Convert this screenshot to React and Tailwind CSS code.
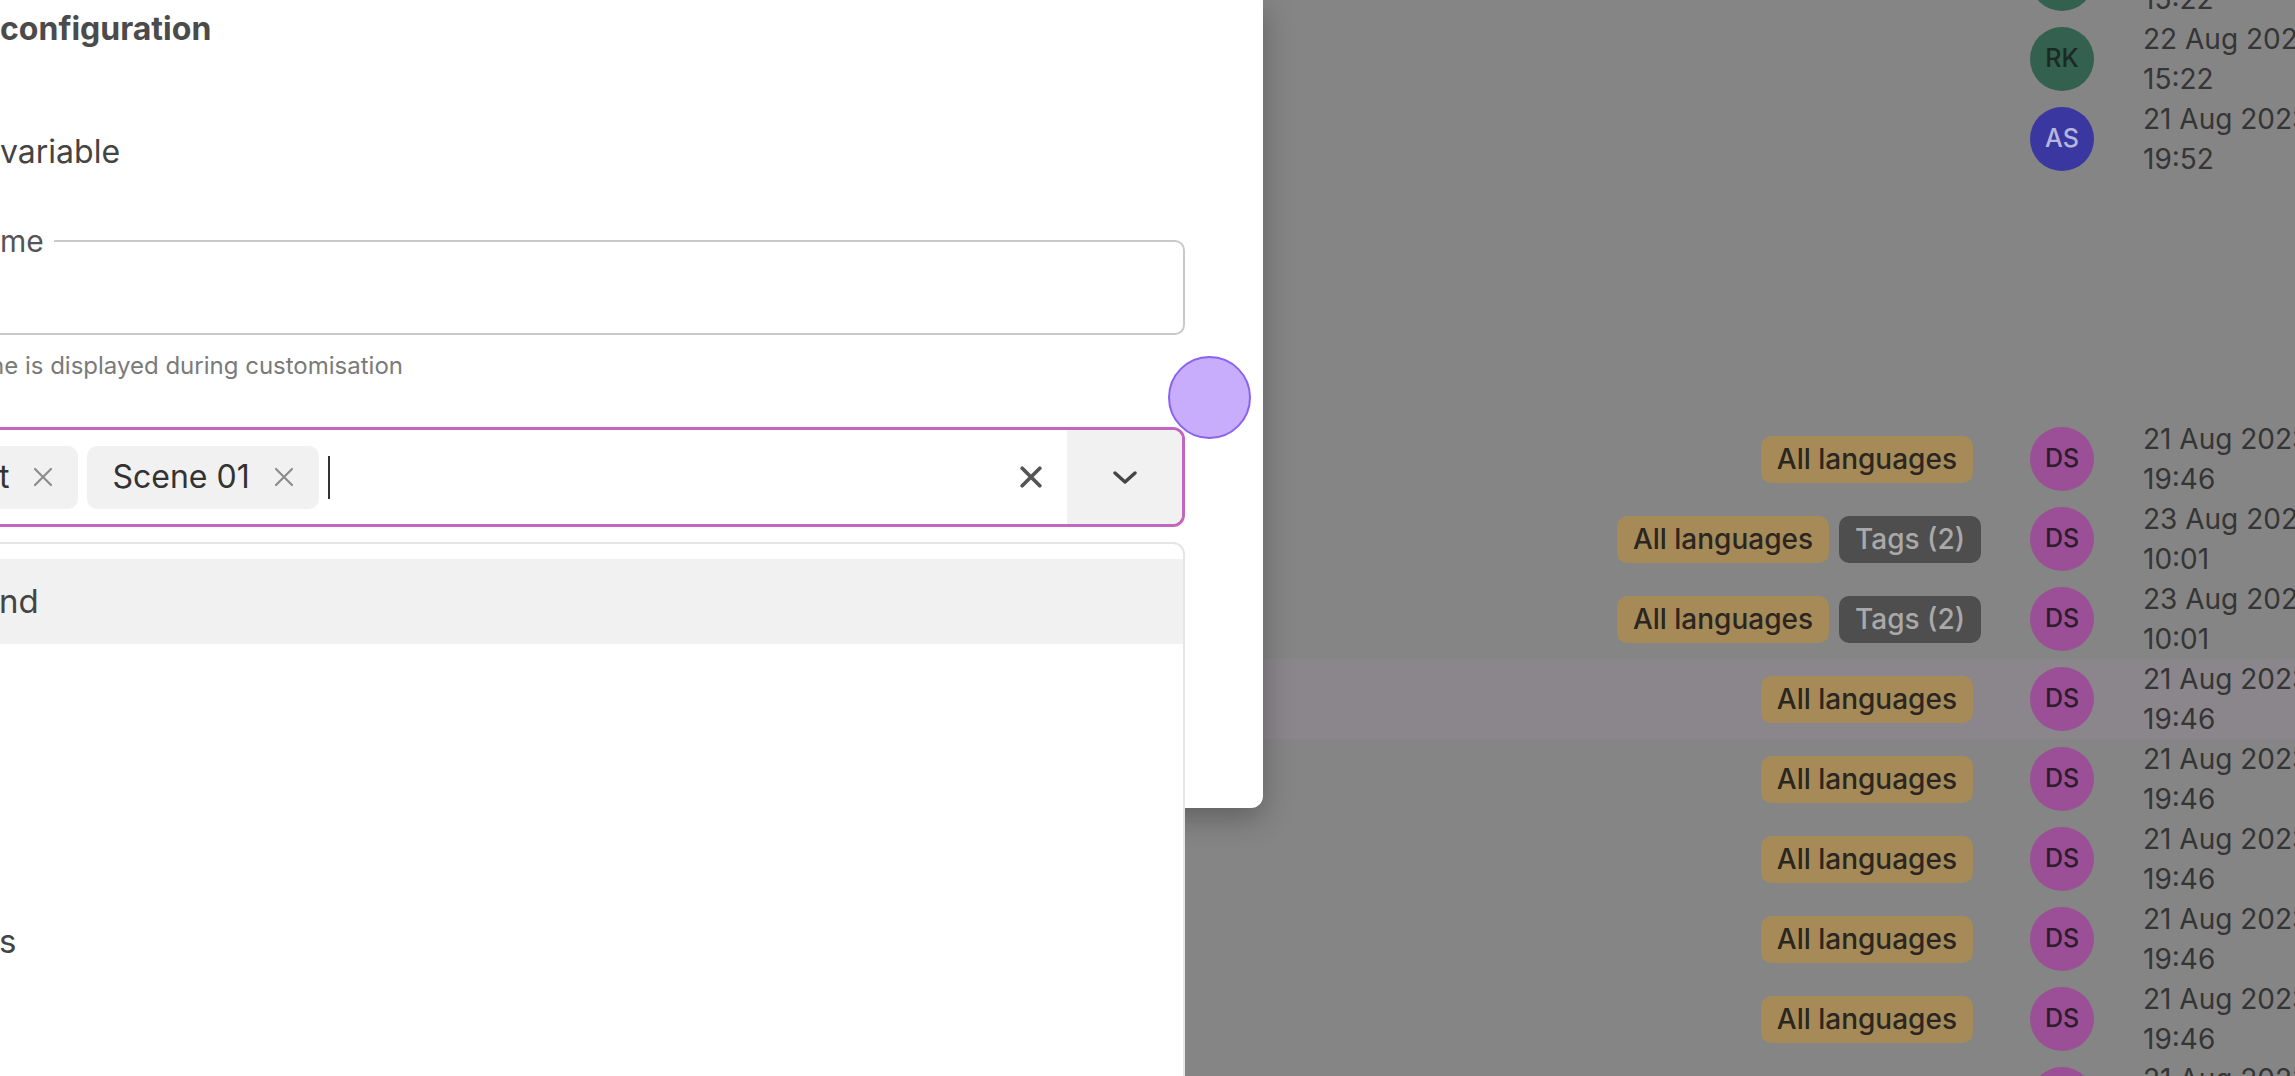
import React from "react";

const AVATARS = {
  RK: "bg-[#33604f] text-[#1b2b24]",
  AS: "bg-[#3a37a1] text-[#b6b6de]",
  DS: "bg-[#9a4f96] text-[#2e1c2d]",
};

const rows = [
  { avatar: "RK", date: ["22 Aug 2023", "15:22"] },
  { avatar: "RK", date: ["22 Aug 2023", "15:22"] },
  { avatar: "AS", date: ["21 Aug 2023", "19:52"] },
  {},
  {},
  {},
  { badges: ["lang"], avatar: "DS", date: ["21 Aug 2023", "19:46"] },
  { badges: ["lang", "tags"], avatar: "DS", date: ["23 Aug 2023", "10:01"] },
  { badges: ["lang", "tags"], avatar: "DS", date: ["23 Aug 2023", "10:01"] },
  { badges: ["lang"], avatar: "DS", date: ["21 Aug 2023", "19:46"], active: true },
  { badges: ["lang"], avatar: "DS", date: ["21 Aug 2023", "19:46"] },
  { badges: ["lang"], avatar: "DS", date: ["21 Aug 2023", "19:46"] },
  { badges: ["lang"], avatar: "DS", date: ["21 Aug 2023", "19:46"] },
  { badges: ["lang"], avatar: "DS", date: ["21 Aug 2023", "19:46"] },
  { badges: ["german", "new"], avatar: "DS", date: ["21 Aug 2023", "19:46"] },
];

function Badge({ kind, alone }) {
  if (kind === "tags")
    return (
      <span className="flex items-center h-[47px] px-[16px] rounded-[10px] bg-[#4e4e4e] text-[#a9a9a9] text-[28px] font-medium">
        Tags (2)
      </span>
    );
  if (kind === "new")
    return (
      <span className="flex items-center h-[47px] px-[16px] rounded-[10px] bg-[#4d8683] text-[#1f2e2d] text-[28px] font-medium">
        New
      </span>
    );
  if (kind === "german")
    return (
      <span className="flex items-center h-[47px] px-[16px] rounded-[10px] bg-[#a68b59] text-[#2b2620] text-[28px] font-medium">
        German
      </span>
    );
  return (
    <span
      className={
        alone
          ? "flex items-center h-[47px] px-[16px] mr-[8px] rounded-[10px] bg-[#a68b59] text-[#2b2620] text-[28px] font-medium"
          : "flex items-center h-[47px] px-[16px] rounded-[10px] bg-[#a68b59] text-[#2b2620] text-[28px] font-medium"
      }
    >
      All languages
    </span>
  );
}

function Row({ row }) {
  const badges = row.badges || [];
  return (
    <div className={row.active ? "flex items-center h-[80px] shrink-0 bg-[#8a868b]" : "flex items-center h-[80px] shrink-0"}>
      <div className="flex-1 flex justify-end items-center gap-[10px] pr-[49px] whitespace-nowrap">
        {badges.map((b, i) => (
          <Badge key={i} kind={b} alone={badges.length === 1} />
        ))}
      </div>
      {row.avatar ? (
        <div className={`w-16 h-16 shrink-0 rounded-full flex items-center justify-center text-[25px] font-medium ${AVATARS[row.avatar]}`}>
          {row.avatar}
        </div>
      ) : (
        <div className="w-16 h-16 shrink-0" />
      )}
      <div className="w-[152px] shrink-0 ml-[49px] text-[28px] leading-[40px] text-[#353535] whitespace-nowrap">
        {row.date && (
          <>
            <div>{row.date[0]}</div>
            <div>{row.date[1]}</div>
          </>
        )}
      </div>
    </div>
  );
}

function XIcon({ size, stroke, width }) {
  return (
    <svg width={size} height={size} viewBox="0 0 20 20" fill="none" className="shrink-0">
      <path d="M2 2 L18 18 M18 2 L2 18" stroke={stroke} strokeWidth={width} strokeLinecap="round" />
    </svg>
  );
}

function Chip({ label }) {
  return (
    <div className="flex items-center shrink-0 h-[63px] pl-[25px] pr-[25px] gap-[24px] rounded-[10px] bg-[#f1f1f1] text-[32px] text-[#333]">
      <span className="leading-[40px] whitespace-nowrap">{label}</span>
      <XIcon size={20} stroke="#8c8c8c" width={2.2} />
    </div>
  );
}

function Modal() {
  return (
    <div className="absolute left-0 top-0 w-[1263px] h-[808px] bg-white rounded-br-[12px] shadow-[0_10px_30px_rgba(0,0,0,0.28)]">
      <div className="flex flex-col pt-[9px] pr-[78px]">
        <h2 className="text-[32px] leading-[40px] font-bold text-[#4b4b4b] whitespace-nowrap">configuration</h2>
        <p className="mt-[83px] text-[32px] leading-[40px] text-[#444]">variable</p>

        <div className="relative mt-[68px] -ml-[40px] h-[95px] border-2 border-[#c9c9c9] rounded-[10px]">
          <span className="absolute left-[38px] -top-[21px] pr-[10px] bg-white text-[30px] leading-[40px] text-[#555]">
            me
          </span>
        </div>

        <p className="mt-[15px] -ml-[10px] text-[24px] leading-[32px] text-[#7a7a7a] whitespace-nowrap">
          ne is displayed during customisation
        </p>

        <div className="mt-[45px] -ml-[40px] h-[100px] border-[3px] border-[#c466be] rounded-[12px] flex items-stretch overflow-hidden">
          <div className="flex-1 flex items-center gap-[9px] pl-[11px]">
            <Chip label="t" />
            <Chip label="Scene 01" />
            <span className="w-[2px] h-[43px] bg-[#333]" />
          </div>
          <div className="w-[72px] flex items-center justify-center">
            <XIcon size={22} stroke="#555" width={3.4} />
          </div>
          <div className="w-[115px] bg-[#f1f1f1] flex items-center justify-center">
            <svg width="24" height="13" viewBox="0 0 24 13" fill="none">
              <path d="M2 2 L12 11 L22 2" stroke="#454545" strokeWidth="3.4" strokeLinecap="round" strokeLinejoin="round" />
            </svg>
          </div>
        </div>
      </div>
    </div>
  );
}

function Listbox() {
  const options = ["nd", "", "", "", "s", "", "", ""];
  return (
    <div className="absolute left-[-10px] top-[542px] w-[1195px] h-[600px] bg-white border-2 border-[#e6e6e6] rounded-tr-[12px] pt-[15px] overflow-hidden">
      {options.map((o, i) => (
        <div
          key={i}
          className={
            i === 0
              ? "flex items-center h-[85px] pl-[7px] bg-[#f1f1f1] text-[33px] text-[#444]"
              : "flex items-center h-[85px] pl-[7px] text-[33px] text-[#444]"
          }
        >
          {o}
        </div>
      ))}
    </div>
  );
}

export default function App() {
  return (
    <div className="relative w-[2295px] h-[1076px] overflow-hidden bg-[#858585] font-[Inter,sans-serif]">
      <div className="flex flex-col -mt-[61px]">
        {rows.map((r, i) => (
          <Row key={i} row={r} />
        ))}
      </div>
      <Modal />
      <Listbox />
      <div className="absolute left-[1168px] top-[356px] w-[83px] h-[83px] rounded-full bg-[#c7adfc] border-2 border-[#8b62ef]" />
    </div>
  );
}
